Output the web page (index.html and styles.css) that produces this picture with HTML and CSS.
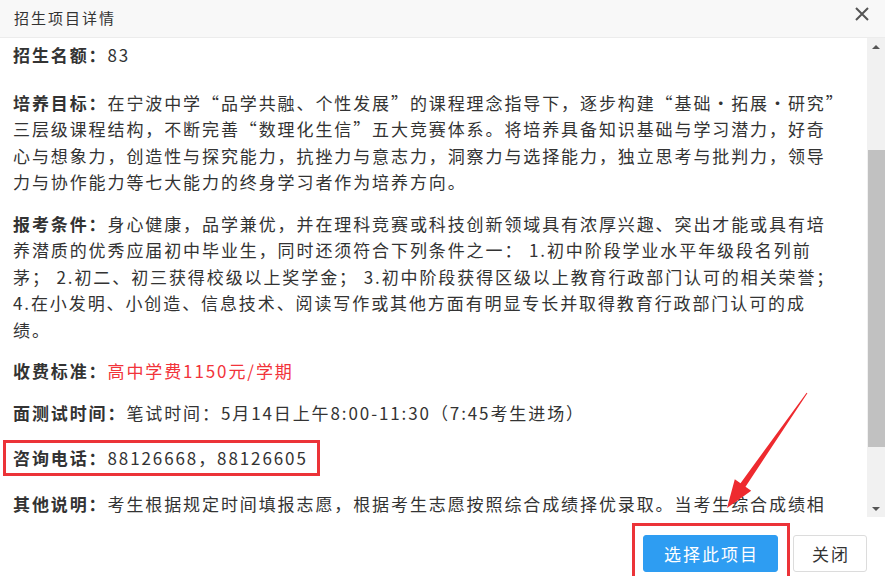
FILE: index.html
```html
<!DOCTYPE html>
<html>
<head>
	<meta charset="utf-8">
	<title>招生项目详情</title>
	<link rel="stylesheet" href="styles.css">
</head>
<body>
<div class="dlg">
  <div class="hd">
    <span class="ttl">招生项目详情</span>
    <svg class="x" width="14" height="14" viewBox="0 0 14 14"><path d="M1 1L13 13M13 1L1 13" stroke="#555" stroke-width="2" fill="none"/></svg>
  </div>
  <div class="bd">
    <div class="txt">
      <p class="first"><b>招生名额：</b>83</p>
      <p><b>培养目标：</b>在宁波中学“品学共融、个性发展”的课程理念指导下，逐步构建“基础•拓展•研究”<br>三层级课程结构，不断完善“数理化生信”五大竞赛体系。将培养具备知识基础与学习潜力，好奇<br>心与想象力，创造性与探究能力，抗挫力与意志力，洞察力与选择能力，独立思考与批判力，领导<br>力与协作能力等七大能力的终身学习者作为培养方向。</p>
      <p><b>报考条件：</b>身心健康，品学兼优，并在理科竞赛或科技创新领域具有浓厚兴趣、突出才能或具有培<br>养潜质的优秀应届初中毕业生，同时还须符合下列条件之一： 1.初中阶段学业水平年级段名列前<br>茅； 2.初二、初三获得校级以上奖学金； 3.初中阶段获得区级以上教育行政部门认可的相关荣誉；<br>4.在小发明、小创造、信息技术、阅读写作或其他方面有明显专长并取得教育行政部门认可的成<br>绩。</p>
      <p><b>收费标准：</b><span class="red">高中学费1150元/学期</span></p>
      <p><b>面测试时间：</b>笔试时间：5月14日上午8:00-11:30（7:45考生进场）</p>
      <p class="mark"><b>咨询电话：</b>88126668，88126605</p>
      <p><b>其他说明：</b>考生根据规定时间填报志愿，根据考生志愿按照综合成绩择优录取。当考生综合成绩相</p>
    </div>
    <div class="bar">
      <div class="arr"><span class="up"></span></div>
      <div class="track">
        <div class="thumb"></div>
      </div>
      <div class="arr"><span class="dn"></span></div>
    </div>
  </div>
  <div class="ft">
    <a class="btn pri">选择此项目</a>
    <a class="btn">关闭</a>
  </div>
</div>
<div class="box"></div>
<svg class="arrow" width="885" height="576" viewBox="0 0 885 576">
  <polygon points="806.6,392.7 807.4,393.3 745.5,486.7 751.2,490.7 727,508 734.8,479.3 740.5,483.3" fill="#ee2a2f"/>
</svg>
</body>
</html>
```

FILE: styles.css
```css
body{margin:0;padding:0;overflow:hidden;background:#fff;}
body{
  font-family: "Noto Sans CJK SC", "Microsoft YaHei", sans-serif;
  color:#333;
}
.dlg{
  width:885px;
  height:576px;
  display:flex;
  flex-direction:column;
}
.hd{
  height:37px;
  flex:none;
  background:#f8f8f8;
  border-bottom:1px solid #ececec;
  display:flex;
  align-items:center;
  justify-content:space-between;
  padding:0 16px 0 14px;
}
.ttl{
  font-size:15px;
  letter-spacing:2px;
  color:#333;
  margin-top:-2px;
}
.x{margin-top:-10px;}
.bd{
  height:479px;
  flex:none;
  display:flex;
}
.txt{
  flex:1;
  overflow:hidden;
  padding:4px 0 0 13px;
  font-size:17px;
  letter-spacing:1.9px;
  line-height:26.5px;
  white-space:nowrap;
}
.txt p{margin:0 0 15px;}
.txt p.first{margin-bottom:21px;}
.txt b{font-weight:bold;color:#333;}
.red{color:#f2333a;}
.txt p.mark{
  display:inline-block;
  border:3px solid #ec3338;
  padding:2px 9px 1px 7px;
  margin-left:-10px;
  margin-top:-1px;
}
.bar{
  width:18px;
  flex:none;
  background:#f1f1f1;
  display:flex;
  flex-direction:column;
}
.arr{
  height:17px;
  flex:none;
  display:flex;
  align-items:center;
  justify-content:center;
}
.up,.dn{
  width:0;
  height:0;
  border-left:4px solid transparent;
  border-right:4px solid transparent;
}
.up{border-bottom:4px solid #555;}
.dn{border-top:4px solid #555;}
.track{
  flex:1;
  padding-top:95px;
}
.thumb{
  height:297px;
  margin-left:1px;
  background:#c1c1c1;
}
.ft{
  flex:1;
  display:flex;
  justify-content:flex-end;
  align-items:flex-start;
  gap:15px;
  padding:18px 18px 0 0;
}
.btn{
  display:flex;
  align-items:center;
  justify-content:center;
  height:37px;
  box-sizing:border-box;
  border-radius:3px;
  font-size:17px;
  letter-spacing:2px;
  text-indent:2px;
  border:1px solid #dcdcdc;
  background:#fff;
  color:#333;
  width:74px;
}
.btn.pri{
  width:135px;
  background:#2e9df2;
  border-color:#2e9df2;
  color:#fff;
}
/* annotations on top */
.box{
  position:absolute;
  left:632px;
  top:523px;
  width:152px;
  height:70px;
  border:3px solid #ec3338;
}
.arrow{
  position:absolute;
  left:0;
  top:0;
}
```
